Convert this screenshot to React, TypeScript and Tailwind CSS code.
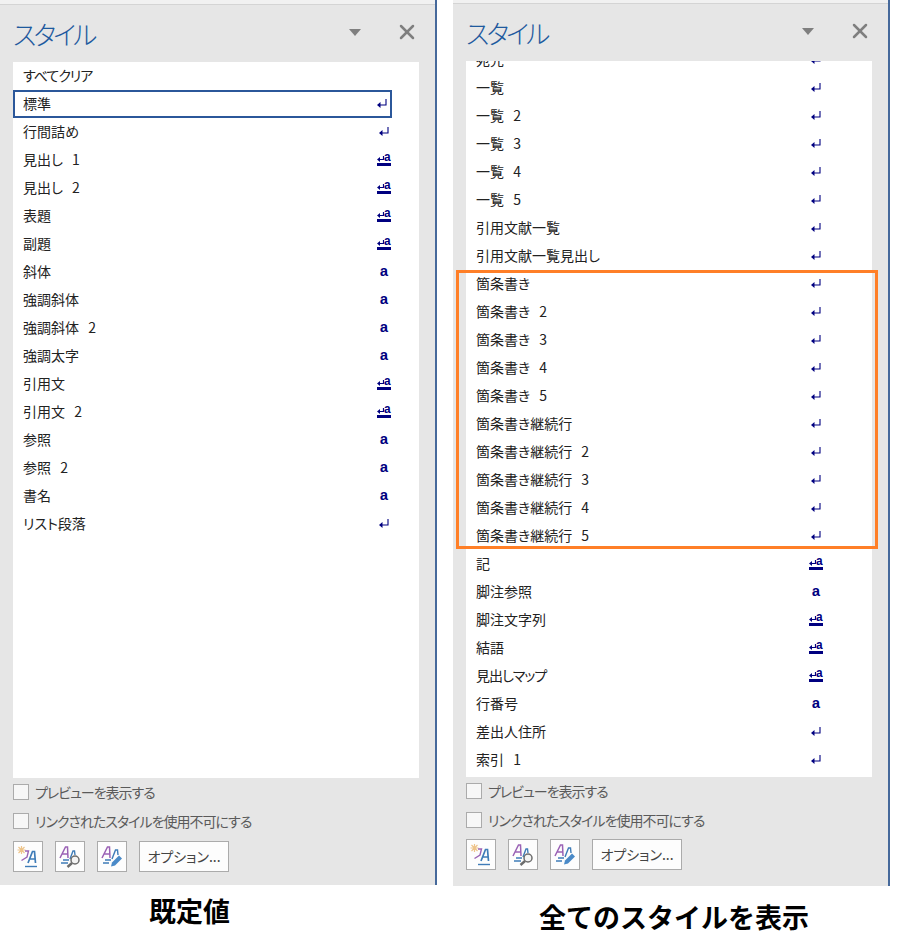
import { X } from 'lucide-react'

const FONT = "font-['Noto_Sans_CJK_JP','Noto_Sans',sans-serif] [font-feature-settings:'palt']"

type Kind = 'p' | 'l' | 'c' | 'n'
type Row = { name: string; kind: Kind; selected?: boolean; tight?: boolean }

const DEFAULT_ROWS: Row[] = [
  { name: 'すべてクリア', kind: 'n', tight: true },
  { name: '標準', kind: 'p', selected: true },
  { name: '行間詰め', kind: 'p' },
  { name: '見出し 1', kind: 'l' },
  { name: '見出し 2', kind: 'l' },
  { name: '表題', kind: 'l' },
  { name: '副題', kind: 'l' },
  { name: '斜体', kind: 'c' },
  { name: '強調斜体', kind: 'c' },
  { name: '強調斜体 2', kind: 'c' },
  { name: '強調太字', kind: 'c' },
  { name: '引用文', kind: 'l' },
  { name: '引用文 2', kind: 'l' },
  { name: '参照', kind: 'c' },
  { name: '参照 2', kind: 'c' },
  { name: '書名', kind: 'c' },
  { name: 'リスト段落', kind: 'p' },
]

const ALL_ROWS: Row[] = [
  { name: '宛先', kind: 'p' },
  { name: '一覧', kind: 'p' },
  { name: '一覧 2', kind: 'p' },
  { name: '一覧 3', kind: 'p' },
  { name: '一覧 4', kind: 'p' },
  { name: '一覧 5', kind: 'p' },
  { name: '引用文献一覧', kind: 'p' },
  { name: '引用文献一覧見出し', kind: 'p' },
  { name: '箇条書き', kind: 'p' },
  { name: '箇条書き 2', kind: 'p' },
  { name: '箇条書き 3', kind: 'p' },
  { name: '箇条書き 4', kind: 'p' },
  { name: '箇条書き 5', kind: 'p' },
  { name: '箇条書き継続行', kind: 'p' },
  { name: '箇条書き継続行 2', kind: 'p' },
  { name: '箇条書き継続行 3', kind: 'p' },
  { name: '箇条書き継続行 4', kind: 'p' },
  { name: '箇条書き継続行 5', kind: 'p' },
  { name: '記', kind: 'l' },
  { name: '脚注参照', kind: 'c' },
  { name: '脚注文字列', kind: 'l' },
  { name: '結語', kind: 'l' },
  { name: '見出しマップ', kind: 'l', tight: true },
  { name: '行番号', kind: 'c' },
  { name: '差出人住所', kind: 'p' },
  { name: '索引 1', kind: 'p' },
]

function ReturnMark() {
  return (
    <svg width="10" height="10" viewBox="0 0 10 10" className="mt-[2px] block">
      <path d="M9 0V6H2" fill="none" stroke="#000080" strokeWidth="1.1" />
      <path d="M0 6L3.5 3V9Z" fill="#000080" />
    </svg>
  )
}

function StyleMark({ kind }: { kind: Kind }) {
  if (kind === 'n') return null
  if (kind === 'p') return <ReturnMark />
  if (kind === 'c') {
    return <span className="mt-[2px] font-['Liberation_Mono',monospace] text-[15px] leading-none font-bold text-[#000080]">a</span>
  }
  return (
    <span className="relative mt-[3px] flex h-[10px] w-[14px] items-start border-b-[3px] border-[#000080]">
      <svg width="8" height="7" viewBox="0 0 8 7" className="block">
        <path d="M6.5 0V3.5H2" fill="none" stroke="#000080" strokeWidth="1.2" />
        <path d="M0 3.5L3 1V6Z" fill="#000080" />
      </svg>
      <span className="absolute top-[-4px] right-0 font-['Liberation_Mono',monospace] text-[12px] leading-[12px] font-bold text-[#000080]">a</span>
    </span>
  )
}

function StyleRow({ row, slim }: { row: Row; slim?: boolean }) {
  return (
    <div
      className={`flex h-7 items-center justify-between pb-[2px] text-[14px] text-[#222222] [word-spacing:6px] ${slim ? 'w-[358px]' : 'w-[379px]'} ${
        row.selected ? 'border-2 border-[#2b579a] pl-2' : 'pl-[10px]'
      }`}
    >
      <span className={`whitespace-pre ${row.tight ? 'tracking-[-1px]' : ''}`}>{row.name}</span>
      <span className="flex w-4 shrink-0 justify-center">
        <StyleMark kind={row.kind} />
      </span>
    </div>
  )
}

function NewStyleIcon() {
  return (
    <svg width="24" height="24" viewBox="0 0 24 24">
      <path d="M5.5 1V9M1.5 5H9.5M2.5 2L8.5 8M8.5 2L2.5 8" stroke="#eec48a" strokeWidth="1.2" />
      <path d="M9 6H12.5L11 12L5.5 15.5" fill="none" stroke="#9a62b5" strokeWidth="1.4" />
      <path d="M12 18L16.5 6.5H18.5L19.5 18M14 14H19" fill="none" stroke="#3f7cb8" strokeWidth="1.7" />
      <path d="M9 21.5H21" stroke="#3f7cb8" strokeWidth="1.4" />
    </svg>
  )
}

function InspectorIcon() {
  return (
    <svg width="24" height="24" viewBox="0 0 24 24">
      <path d="M2 13L7.5 2H9.5L10 13M4.5 9H10" fill="none" stroke="#9a62b5" strokeWidth="1.5" />
      <path d="M12 14L15 6H16.5L17 10M5 15H11M3 18H10" fill="none" stroke="#3f7cb8" strokeWidth="1.4" />
      <circle cx="17" cy="15" r="4" fill="#f4f4f4" stroke="#6d6d6d" strokeWidth="1.5" />
      <path d="M14 18L9.5 22" stroke="#6d6d6d" strokeWidth="2.4" />
    </svg>
  )
}

function ManageIcon() {
  return (
    <svg width="24" height="24" viewBox="0 0 24 24">
      <path d="M2 13L7.5 2H9.5L10 13M4.5 9H10" fill="none" stroke="#9a62b5" strokeWidth="1.5" />
      <path d="M12 14L15.5 5H17.5L18 10M5 15H11M3 18H9" fill="none" stroke="#3f7cb8" strokeWidth="1.4" />
      <path d="M11 21.5L12 17.5L19 10.5L22 13.5L15 20.5Z" fill="#4a8ac8" />
    </svg>
  )
}

function CheckRow({ label, className }: { label: string; className: string }) {
  return (
    <div className={`flex h-4 items-center ${className}`}>
      <span className="h-4 w-4 shrink-0 border border-[#ababab] bg-[#f7f7f7]" />
      <span className="ml-[6px] text-[14px] tracking-[-1px] whitespace-nowrap text-[#5a5a5a]">{label}</span>
    </div>
  )
}

function Panel({ rows, allStyles }: { rows: Row[]; allStyles?: boolean }) {
  return (
    <div
      className={`flex w-[437px] flex-col border-r-2 border-[#46699b] bg-[#e6e6e6] ${allStyles ? 'h-[886px]' : 'h-[885px]'}`}
    >
      <div className={`shrink-0 border-b border-[#d4d4d4] bg-[#f1f1f1] ${allStyles ? 'h-[4px]' : 'h-[5px]'}`} />
      <div className="flex h-[57px] shrink-0 items-start justify-between pr-[16px] pl-[13px]">
        <span className="mt-[7px] text-[26px] leading-[44px] font-light tracking-[-3px] text-[#1f5a9e]">スタイル</span>
        <div className="mt-[15px] flex items-center">
          <span className="h-0 w-0 border-x-[6px] border-t-[7px] border-x-transparent border-t-[#7f7f7f]" />
          <X className="ml-[34px] h-6 w-6 text-[#7f7f7f]" strokeWidth={2.5} />
        </div>
      </div>
      <div className="mx-[13px] h-[716px] w-[406px] shrink-0 overflow-hidden bg-white">
        <div className={allStyles ? 'mt-[-15px]' : ''}>
          {rows.map((row) => (
            <StyleRow key={row.name} row={row} slim={allStyles} />
          ))}
        </div>
      </div>
      <div className="px-[13px] pt-[6px]">
        <CheckRow label="プレビューを表示する" className="" />
        <CheckRow label="リンクされたスタイルを使用不可にする" className="mt-[13px]" />
        <div className={`flex gap-3 ${allStyles ? 'mt-[11px]' : 'mt-[12px]'}`}>
          <button className="flex h-[31px] w-[30px] items-center justify-center border border-[#ababab] bg-[#fdfdfd]">
            <NewStyleIcon />
          </button>
          <button className="flex h-[31px] w-[30px] items-center justify-center border border-[#ababab] bg-[#fdfdfd]">
            <InspectorIcon />
          </button>
          <button className="flex h-[31px] w-[30px] items-center justify-center border border-[#ababab] bg-[#fdfdfd]">
            <ManageIcon />
          </button>
          <button className="h-[31px] w-[90px] border border-[#ababab] bg-[#fdfdfd] text-[14px] text-[#444444]">
            オプション...
          </button>
        </div>
      </div>
    </div>
  )
}

export default function App() {
  return (
    <div className={`flex h-[946px] w-[898px] overflow-hidden bg-white ${FONT}`}>
      <div className="w-[437px] shrink-0">
        <Panel rows={DEFAULT_ROWS} />
        <div className="mt-[13px] pl-[149px] text-[27px] leading-[26px] font-bold text-black [font-feature-settings:normal]">既定値</div>
      </div>
      <div className="relative ml-4 w-[437px] shrink-0">
        <Panel rows={ALL_ROWS} allStyles />
        <div className="mt-[18px] pl-[86px] text-[27px] leading-[26px] font-bold whitespace-nowrap text-black [font-feature-settings:normal]">
          全てのスタイルを表示
        </div>
        <div className="absolute top-[270px] left-[3px] h-[279px] w-[422px] border-[3px] border-[#ff7f27]" />
      </div>
    </div>
  )
}
